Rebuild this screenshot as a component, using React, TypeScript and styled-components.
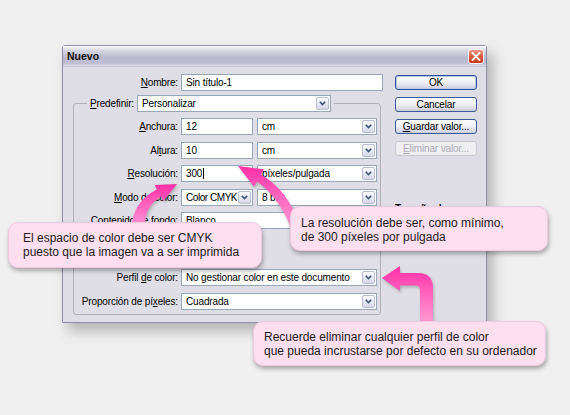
import React from 'react';
import styled, { createGlobalStyle } from 'styled-components';

const GlobalStyle = createGlobalStyle`
  html, body {
    margin: 0;
    padding: 0;
    background: #f0f0f0;
  }
  body {
    font-family: 'Liberation Sans', Arial, sans-serif;
  }
`;

type Note = { id: string; x: number; y: number; w: number; h: number; padTop: number; padLeft: number; lines: string[] };

const notes: Note[] = [
  {
    id: 'mode',
    x: 8,
    y: 222,
    w: 254,
    h: 46,
    padTop: 8,
    padLeft: 14,
    lines: ['El espacio de color debe ser CMYK', 'puesto que la imagen va a ser imprimida'],
  },
  {
    id: 'res',
    x: 290,
    y: 206,
    w: 258,
    h: 45,
    padTop: 9,
    padLeft: 10,
    lines: ['La resolución debe ser, como mínimo,', 'de 300 píxeles por pulgada'],
  },
  {
    id: 'profile',
    x: 253,
    y: 321,
    w: 293,
    h: 45,
    padTop: 8,
    padLeft: 10,
    lines: ['Recuerde eliminar cualquier perfil de color', 'que pueda incrustarse por defecto en su ordenador'],
  },
];

function Chevron() {
  return (
    <svg width="7" height="5" viewBox="0 0 7 5">
      <path d="M0.8 0.8 L3.5 3.6 L6.2 0.8" fill="none" stroke="#3d4f74" strokeWidth="1.6" />
    </svg>
  );
}

function Select({ value, width, tight }: { value: string; width?: number; tight?: boolean }) {
  return (
    <Field $w={width}>
      <FieldText $tight={tight}>{value}</FieldText>
      <ArrowButton>
        <Chevron />
      </ArrowButton>
    </Field>
  );
}

export default function App(): JSX.Element {
  return (
    <Page>
      <GlobalStyle />
      <Dialog>
        <TitleBar>
          <Title>Nuevo</Title>
          <CloseButton>
            <svg width="10" height="9" viewBox="0 0 10 9">
              <path d="M1.5 1 L8.5 8 M8.5 1 L1.5 8" stroke="#fff" strokeWidth="1.8" strokeLinecap="round" />
            </svg>
          </CloseButton>
        </TitleBar>

        <Body>
          <FormColumn>
            <NameRow>
              <Label>
                <Key>N</Key>ombre:
              </Label>
              <Field>
                <FieldText>Sin título-1</FieldText>
              </Field>
            </NameRow>

            <Group>
              <Legend>
                <LegendInner>
                  <Label>
                    <Key>P</Key>redefinir:
                  </Label>
                  <Select value="Personalizar" width={194} />
                </LegendInner>
              </Legend>

              <Rows>
                <FormRow>
                  <Label>
                    <Key>A</Key>nchura:
                  </Label>
                  <Pair>
                    <Field $w={72}>
                      <FieldText>12</FieldText>
                    </Field>
                    <Select value="cm" />
                  </Pair>
                </FormRow>

                <FormRow>
                  <Label>
                    Al<Key>t</Key>ura:
                  </Label>
                  <Pair>
                    <Field $w={72}>
                      <FieldText>10</FieldText>
                    </Field>
                    <Select value="cm" />
                  </Pair>
                </FormRow>

                <FormRow>
                  <Label>
                    <Key>R</Key>esolución:
                  </Label>
                  <Pair>
                    <Field $w={72}>
                      <FieldText>300</FieldText>
                      <Caret />
                    </Field>
                    <Select value="píxeles/pulgada" />
                  </Pair>
                </FormRow>

                <FormRow>
                  <Label>
                    <Key>M</Key>odo de color:
                  </Label>
                  <Pair>
                    <Select value="Color CMYK" width={72} tight />
                    <Select value="8 bits" />
                  </Pair>
                </FormRow>

                <FormRow>
                  <Label>
                    Contenido <Key>d</Key>e fondo:
                  </Label>
                  <Select value="Blanco" />
                </FormRow>

                <AdvancedRow>
                  <ToggleDot>
                    <Chevron />
                  </ToggleDot>
                  <Rule />
                </AdvancedRow>

                <FormRow>
                  <Label>
                    Perfil <Key>d</Key>e color:
                  </Label>
                  <Select value="No gestionar color en este documento" />
                </FormRow>

                <FormRow>
                  <Label>
                    Proporción de pí<Key>x</Key>eles:
                  </Label>
                  <Select value="Cuadrada" />
                </FormRow>
              </Rows>
            </Group>
          </FormColumn>

          <ButtonColumn>
            <Button $primary>OK</Button>
            <Button>Cancelar</Button>
            <Button>
              <Key>G</Key>uardar valor...
            </Button>
            <Button disabled>
              <Key>E</Key>liminar valor...
            </Button>
            <SizeInfo>Tamaño de imagen:</SizeInfo>
          </ButtonColumn>
        </Body>
      </Dialog>

      <Arrows width="570" height="415" viewBox="0 0 570 415">
        <defs>
          <linearGradient id="pink" x1="0" y1="0" x2="0" y2="1">
            <stop offset="0" stopColor="#ff2fa8" />
            <stop offset="1" stopColor="#ff9ed6" />
          </linearGradient>
        </defs>
        {/* points at Modo de color */}
        <path d="M131 229 Q133 201 157 189.5 L154.6 185 L177 184 L163.4 201 L161 196.5 Q144 206 145 229 Z" fill="url(#pink)" />
        {/* points at Resolución */}
        <path d="M238 166 L264 169.3 L261 174.5 Q287 190 300 224 L291 228 Q279 197 257 181.5 L254 186.7 Z" fill="url(#pink)" />
        {/* points at Perfil de color */}
        <path d="M382 278 L400 266 L400 273 L418 273 Q433 273 433 288 L433 324 L420 324 L420 290 Q420 285.5 416 285.5 L400 285.5 L400 291 Z" fill="url(#pink)" />
      </Arrows>

      {notes.map((note) => (
        <Callout key={note.id} $x={note.x} $y={note.y} $w={note.w} $h={note.h} $padTop={note.padTop} $padLeft={note.padLeft}>
          {note.lines.map((line) => (
            <div key={line}>{line}</div>
          ))}
        </Callout>
      ))}
    </Page>
  );
}

const Page = styled.div`
  position: relative;
  box-sizing: border-box;
  width: 570px;
  height: 415px;
  overflow: hidden;
  padding: 45px 0 0 62px;
  background: #f0f0f0;
`;

const Dialog = styled.div`
  box-sizing: border-box;
  width: 425px;
  height: 278px;
  display: flex;
  flex-direction: column;
  background: #dfdee6;
  border: 1px solid #8f8ea8;
  border-radius: 3px 3px 0 0;
  box-shadow: 6px 8px 14px rgba(0, 0, 0, 0.26);
`;

const TitleBar = styled.div`
  height: 20px;
  display: flex;
  align-items: center;
  justify-content: space-between;
  padding: 0 2px 0 4px;
  background: linear-gradient(180deg, #fbfbfd 0%, #d8d8e4 22%, #b8b7cc 60%, #c0bfd2 88%, #dcdbe6 100%);
  border-bottom: 1px solid #c9c8d6;
`;

const Title = styled.span`
  font-size: 10.5px;
  font-weight: bold;
  color: #111;
`;

const CloseButton = styled.div`
  box-sizing: border-box;
  width: 16px;
  height: 15px;
  display: flex;
  align-items: center;
  justify-content: center;
  border: 1px solid #f4f4f8;
  border-radius: 3px;
  background: linear-gradient(180deg, #ee9c88 0%, #dc5a3e 50%, #c23a1e 100%);
`;

const Body = styled.div`
  flex: 1;
  display: flex;
  padding: 7px 9px 0 10px;
`;

const FormColumn = styled.div`
  width: 308px;
  display: flex;
  flex-direction: column;
`;

const NameRow = styled.div`
  display: grid;
  grid-template-columns: 105px 202px;
  column-gap: 3px;
  align-items: center;
  height: 17px;
`;

const Label = styled.span`
  font-size: 10px;
  letter-spacing: -0.15px;
  color: #000;
  text-align: right;
  white-space: nowrap;
`;

const Key = styled.span`
  text-decoration: underline;
`;

const Field = styled.div<{ $w?: number }>`
  box-sizing: border-box;
  height: 17px;
  ${(p) => (p.$w ? `width: ${p.$w}px; flex: none;` : 'flex: 1; min-width: 0;')}
  display: flex;
  align-items: center;
  padding-left: 4px;
  background: #fff;
  border: 1px solid #98a6ba;
`;

const FieldText = styled.span<{ $tight?: boolean }>`
  font-size: 10px;
  letter-spacing: ${(p) => (p.$tight ? '-0.45px' : '-0.15px')};
  color: #000;
  white-space: nowrap;
  overflow: hidden;
`;

const Caret = styled.span`
  width: 1px;
  height: 11px;
  margin-left: 1px;
  background: #000;
`;

const ArrowButton = styled.div`
  box-sizing: border-box;
  width: 13px;
  height: 13px;
  margin: 0 1px 0 auto;
  flex: none;
  display: flex;
  align-items: center;
  justify-content: center;
  border: 1px solid #b9c0d4;
  border-radius: 2px;
  background: linear-gradient(180deg, #fbfbfd 0%, #e4e6f0 60%, #d3d6e6 100%);
`;

const Group = styled.fieldset`
  margin: 4px 0 0;
  padding: 0 3px 4px 0;
  border: 1px solid #b1b0ba;
  border-radius: 3px;
  min-width: 0;
`;

const Legend = styled.legend`
  margin-left: 13px;
  padding: 0 3px;
`;

const LegendInner = styled.div`
  display: flex;
  align-items: center;
  gap: 3px;
`;

const Rows = styled.div`
  display: flex;
  flex-direction: column;
  gap: 6.5px;
  padding-top: 6px;
`;

const FormRow = styled.div`
  display: grid;
  grid-template-columns: 104px 196px;
  column-gap: 3px;
  align-items: center;
  height: 17px;
`;

const Pair = styled.div`
  display: flex;
  gap: 4px;
`;

const AdvancedRow = styled.div`
  height: 27px;
  display: flex;
  align-items: center;
  gap: 5px;
  padding-left: 12px;
`;

const ToggleDot = styled.div`
  box-sizing: border-box;
  width: 14px;
  height: 14px;
  flex: none;
  display: flex;
  align-items: center;
  justify-content: center;
  border: 1px solid #a9afc4;
  border-radius: 50%;
  background: linear-gradient(180deg, #ffffff, #d6d8e6);
`;

const Rule = styled.div`
  flex: 1;
  height: 0;
  margin-right: 120px;
  border-top: 1px solid #c4c3cc;
`;

const ButtonColumn = styled.div`
  margin-left: 14px;
  width: 82px;
  display: flex;
  flex-direction: column;
  gap: 7px;
  padding-top: 1px;
`;

const Button = styled.div<{ $primary?: boolean; disabled?: boolean }>`
  box-sizing: border-box;
  height: 15px;
  display: flex;
  align-items: center;
  justify-content: center;
  font-size: 10px;
  letter-spacing: -0.15px;
  border-radius: 3px;
  color: ${(p) => (p.disabled ? '#acabb4' : '#000')};
  border: 1px solid ${(p) => (p.disabled ? '#c9c8d2' : p.$primary ? '#2a4f96' : '#3a5a98')};
  background: ${(p) =>
    p.disabled ? '#efeff2' : 'linear-gradient(180deg, #ffffff 0%, #f1f1f6 45%, #d9d9e6 85%, #c8c8da 100%)'};
  box-shadow: ${(p) => (p.$primary ? 'inset 0 0 0 1px #b8c8ec' : 'none')};
`;

const SizeInfo = styled.span`
  font-size: 10px;
  font-weight: bold;
  color: #000;
  margin-top: 40px;
`;

const Arrows = styled.svg`
  position: absolute;
  left: 0;
  top: 0;
  z-index: 1;
  pointer-events: none;
  filter: drop-shadow(1px 2px 1.5px rgba(0, 0, 0, 0.22));
`;

const Callout = styled.div<{ $x: number; $y: number; $w: number; $h: number; $padTop: number; $padLeft: number }>`
  position: absolute;
  z-index: 2;
  box-sizing: border-box;
  left: ${(p) => p.$x}px;
  top: ${(p) => p.$y}px;
  width: ${(p) => p.$w}px;
  height: ${(p) => p.$h}px;
  padding: ${(p) => p.$padTop}px 0 0 ${(p) => p.$padLeft}px;
  background: #fddff0;
  border: 1px solid #f2c8e0;
  border-radius: 10px;
  box-shadow: 1px 3px 4px rgba(0, 0, 0, 0.3);
  font-size: 12px;
  line-height: 14px;
  color: #1c1c1c;
  white-space: nowrap;
`;
